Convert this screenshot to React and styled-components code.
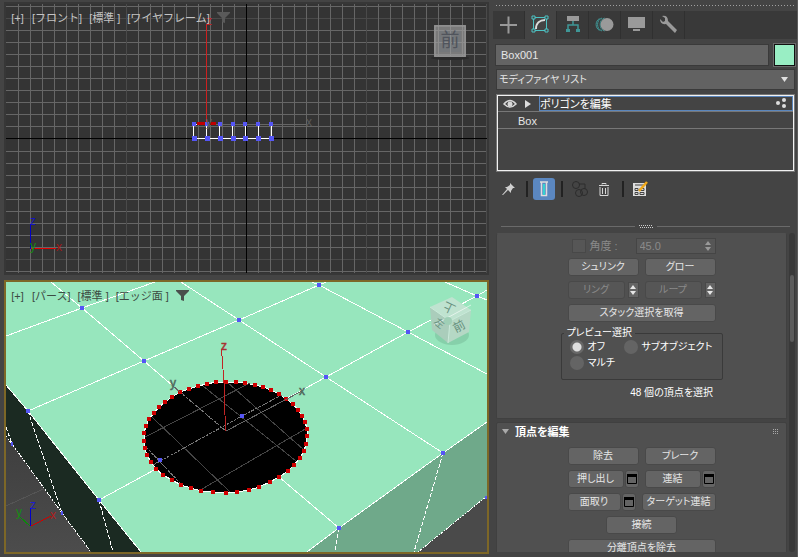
import { useState } from "react"
import styled, { createGlobalStyle } from "styled-components"

const GlobalStyle = createGlobalStyle`
* { box-sizing: border-box; }
body {
  margin: 0;
  background: #444444;
  color: #e6e6e6;
  font-family: "Liberation Sans", "Noto Sans CJK JP", sans-serif;
  font-size: 11px;
  line-height: 14px;
  font-feature-settings: "palt";
}
button, input, select {
  font: inherit;
  font-feature-settings: inherit;
  color: inherit;
  margin: 0;
}
`

const Workspace = styled.main`
  display: flex;
  gap: 4px;
  height: 100vh;
  padding-left: 4px;
  overflow: hidden;
`
const Viewports = styled.section`
  flex: 1;
  min-width: 0;
  display: grid;
  grid-template-rows: 273fr 274fr;
  gap: 5px;
  padding: 2px 0 3px;
`
const Viewport = styled.div`
  position: relative;
  min-height: 0;
  overflow: hidden;
  border: 2px solid ${p => (p.$active ? "#7d6727" : "#373737")};
  background: #343434;
`
const Scene = styled.svg`
  display: block;
  width: 100%;
  height: 100%;
  font-family: "Liberation Sans", "Noto Sans CJK JP", sans-serif;
`
const ViewLabels = styled.div`
  position: absolute;
  top: 7px;
  left: 4px;
  display: flex;
  align-items: center;
  gap: 7px;
  color: ${p => (p.$dark ? "#3c4a42" : "#c4c4c4")};
`
const ViewLabel = styled.button`
  min-width: 15px;
  padding: 0;
  border: 0;
  background: none;
  font-feature-settings: normal;
  white-space: pre;
  svg { display: block; }
`

const Panel = styled.aside`
  flex: 0 0 305px;
  display: flex;
  flex-direction: column;
  padding: 4px 2px 5px 0;
  border-right: 1px solid #5c5c5c;
`
const Grip = styled.div`
  height: 3px;
  margin: 0 0 4px 2px;
  background: radial-gradient(circle, #a0a0a0 0 1px, transparent 1px) 0 0 / 3px 3px;
`
const Tabs = styled.nav`
  display: flex;
  height: 28px;
  margin-right: -2px;
  background: #393939;
`
const Tab = styled.button`
  width: 32px;
  padding: 0;
  border: 0;
  border-right: 1px solid #303030;
  background: ${p => (p.$active ? "#444444" : "transparent")};
  display: grid;
  place-items: center;
`
const NameRow = styled.div`
  display: flex;
  gap: 5px;
  margin: 5px 0 3px 2px;
`
const NameInput = styled.input`
  flex: 1;
  min-width: 0;
  height: 22px;
  padding: 0 5px;
  border: 1px solid #3a3a3a;
  background: #646464;
`
const Swatch = styled.button`
  width: 21px;
  height: 22px;
  padding: 0;
  border: 1px solid #111;
  outline: 1px solid #6a6a6a;
  background: #99eec4;
`
const SelectWrap = styled.div`
  position: relative;
  margin-left: 3px;
  svg { position: absolute; right: 7px; top: 8px; pointer-events: none; }
`
const ModifierSelect = styled.select`
  appearance: none;
  display: block;
  width: 100%;
  height: 21px;
  padding: 0 2px;
  border: 1px solid #3a3a3a;
  border-radius: 0;
  background: #626262;
  font-size: 10px;
`
const Stack = styled.div`
  height: 78px;
  margin: 4px 0 0 3px;
  border: 2px solid #f2f2f2;
  outline: 1px solid #777;
  outline-offset: -1px;
`
const StackRow = styled.div`
  display: flex;
  align-items: center;
  gap: 6px;
  height: ${p => (p.$plain ? 17 : 16)}px;
  padding: ${p => (p.$plain ? "2px 0 0 20px" : "0 0 0 5px")};
  border-bottom: 1px solid #777;
  svg { flex: none; }
`
const StackName = styled.div`
  flex: 1;
  display: flex;
  align-items: center;
  justify-content: space-between;
  height: 15px;
  padding-right: 5px;
  border: 1px solid #5a86bd;
  color: #fff;
`
const StackTools = styled.div`
  display: flex;
  align-items: center;
  height: 22px;
  margin: 6px 0 0 4px;
`
const Tool = styled.button`
  width: ${p => p.$w || 22}px;
  height: 22px;
  padding: 0;
  border: 0;
  border-radius: 3px;
  background: ${p => (p.$active ? "#5b87c0" : "none")};
  display: grid;
  place-items: center;
`
const Divider = styled.span`
  width: 2px;
  height: 16px;
  margin: 0 ${p => p.$gap || 5}px;
  background: #222;
`
const Splitter = styled.div`
  display: flex;
  align-items: center;
  gap: 4px;
  height: 5px;
  margin: 24px 5px 4px 8px;
  &::before, &::after { content: ""; flex: 1; height: 1px; background: #6a6a6a; }
`
const Scroller = styled.div`
  flex: 1;
  min-height: 0;
  display: flex;
  gap: 2px;
  margin-left: 3px;
`
const Rollouts = styled.div`
  flex: 1;
  overflow: hidden;
`
const Track = styled.div`
  width: 6px;
  padding: 42px 1px 0;
  border-radius: 3px;
  background: #393939;
  &::before { content: ""; display: block; height: 67px; border-radius: 3px; background: #5c5c5c; }
`
const Rollout = styled.section`
  display: flex;
  flex-direction: column;
  align-items: center;
  height: ${p => (p.$first ? 186 : 150)}px;
  margin-bottom: 3px;
  padding-top: ${p => (p.$first ? 4 : 2)}px;
  border: 1px solid #404040;
  border-top-color: ${p => (p.$first ? "#505050" : "#404040")};
  border-radius: 2px;
  background: #505050;
`
const RolloutTitle = styled.h2`
  align-self: stretch;
  display: flex;
  align-items: center;
  gap: 5px;
  height: 14px;
  margin: 0 7px 8px 5px;
  font-size: 11px;
  color: #fff;
  svg:last-child { margin-left: auto; }
`
const Form = styled.div`
  width: 148px;
  display: flex;
  flex-direction: column;
  align-items: center;
  gap: 5px;
  font-size: 10px;
`
const Row = styled.div`
  width: 100%;
  display: flex;
  gap: 6px;
  height: 18px;
  flex: none;
`
const Pair = styled.div`
  display: flex;
  align-items: center;
  width: 71px;
  gap: ${p => p.$gap || 1}px;
`
const Btn = styled.button`
  flex: ${p => (p.$w ? "none" : 1)};
  width: ${p => (p.$w ? p.$w + "px" : "auto")};
  height: 18px;
  padding: 0;
  border: 1px solid #494949;
  border-radius: 3px;
  background: #646464;
  color: #e6e6e6;
  line-height: 14px;
  white-space: nowrap;
  &:disabled { background: #565656; color: #8a8a8a; }
`
const Square = styled(Btn)`
  flex: none;
  width: 14px;
  display: grid;
  place-items: center;
  svg { display: block; }
`
const Arrows = styled(Square)`
  width: 11px;
  height: 16px;
  border-radius: 0;
`
const AngleRow = styled.div`
  width: 100%;
  display: flex;
  align-items: center;
  height: 16px;
  padding-left: 4px;
  margin-bottom: -1px;
  color: #8a8a8a;
  font-size: 11px;
  label { display: flex; align-items: center; gap: 4px; flex: 1; }
`
const CheckBox = styled.input`
  appearance: none;
  width: 14px;
  height: 14px;
  border: 1px solid #484848;
  background: #565656;
`
const NumberBox = styled.div`
  display: flex;
  align-items: center;
  width: 80px;
  height: 16px;
  padding-right: 3px;
  border: 1px solid #454545;
  background: #565656;
  input { flex: 1; min-width: 0; padding: 0 3px; border: 0; background: none; }
`
const Group = styled.fieldset`
  width: 162px;
  height: 53px;
  margin: 0;
  padding: 0 0 0 8px;
  border: 1px solid #3a3a3a;
  border-radius: 2px;
  display: grid;
  grid-template-columns: 54px 1fr;
  grid-template-rows: 16px 16px;
  color: #fff;
  legend { padding: 0 3px; margin-left: -6px; height: 12px; line-height: 12px; }
  label { display: flex; align-items: center; gap: 4px; white-space: nowrap; }
`
const Radio = styled.input`
  appearance: none;
  flex: none;
  width: 14px;
  height: 14px;
  border-radius: 50%;
  background: #646464;
  &:checked { background: radial-gradient(circle, #dedede 0 4px, #686868 5px); }
`
const Status = styled.p`
  align-self: flex-end;
  margin: 6px 73px 0 0;
  font-size: 10px;
  color: #fff;
`

const Funnel = ({ fill }) => (
  <svg width="13" height="12"><path d="M0 0h13v1L8 6v5L5 10V6L0 1z" fill={fill} /></svg>
)
const UpDown = ({ fill = "#e6e6e6" }) => (
  <svg width="7" height="10"><path d="M0 4h6L3 0zM0 6h6L3 10z" fill={fill} /></svg>
)
const WindowIcon = () => (
  <svg width="10" height="10"><path d="M0.5 0.5h9v9h-9z" fill="none" stroke="#000" /><path d="M0 0h10v3H0z" /></svg>
)

// dim lines run through 126, 366 and 486, every tenth grid step
const columns = Array.from({ length: 40 }, (_, i) => 18 + i * 12)
const rows = [6, 18, 30, 42, 54, 66, 78, 90, 102, 114, 126, 151, 163, 175, 187, 199, 211, 223, 235, 247, 259, 271]
const boxX = [194, 207, 220, 233, 245, 258, 271]

const Dot = ({ x, y, color = "#5555f5", size = 4 }) => (
  <rect x={x - 2} y={y - 2} width={size} height={size} fill={color} />
)

const FrontScene = () => (
  <Scene viewBox="6 4 481 269" preserveAspectRatio="xMidYMid slice" shapeRendering="crispEdges">
    {rows.map(y => <rect key={y} x="6" y={y} width="481" height="1" fill={y === 18 || y === 259 ? "#4a4a4a" : "#666"} />)}
    {columns.map(x => <rect key={x} x={x} y="4" width="1" height="269" fill={x % 120 === 6 ? "#4a4a4a" : "#666"} />)}
    <path d="M6 138.5H487M246.5 4V273" stroke="#000" />
    <path d="M193.5 124.5H206M193.5 138.5H271M193.5 124V138M206.5 124V138M219.5 124V138M232.5 124V138M245.5 124V138M258.5 124V138M271.5 124V138" stroke="#fff" fill="none" />
    <path d="M206 124.5H307" stroke="#666" />
    <path d="M197 123.5H206M210 123.5H216" stroke="#c00000" strokeWidth="3" />
    {boxX.map(x => <g key={x}><Dot x={x} y={124} /><Dot x={x} y={138} size={5} /></g>)}
    <path d="M206.5 24V122" stroke="#cc2020" />
    <g fontSize="12">
      <text x="206" y="25" fill="#b82222">z</text>
      <text x="206" y="126" fill="#5c5c5c">y</text>
      <text x="306" y="126" fill="#5c5c5c">x</text>
      <path d="M30.5 224V249" stroke="#0000c8" />
      <path d="M31 248.5H56" stroke="#e00000" />
      <text x="30" y="225" fill="#1414c0">z</text>
      <text x="30" y="250" fill="#168a16">y</text>
      <text x="56" y="251" fill="#a01818">x</text>
    </g>
    <g shapeRendering="auto">
      <ellipse cx="450" cy="58" rx="19" ry="2" fill="#2a2a2a" />
      <rect x="434" y="25" width="32" height="32" fill="#858585" />
      <rect x="435" y="26" width="30" height="30" fill="#7a7a7a" stroke="#9a9a9a" />
      <rect x="439" y="30" width="22" height="22" fill="#70747a" opacity="0.6" />
      <path d="M438.5 26V56M450.5 26V56M462.5 26V56M435 30.5H465M435 42.5H465M435 54.5H465" stroke="#999" opacity="0.6" />
      <text x="450" y="47" fontSize="19" textAnchor="middle" fill="#50545c">前</text>
    </g>
  </Scene>
)

const hole = [
  [149, 419], [146, 426], [144, 433], [144, 441], [145, 448], [147, 455], [151, 462], [156, 469],
  [163, 475], [172, 480], [181, 485], [191, 488], [201, 491], [213, 492], [226, 493], [237, 492],
  [249, 490], [259, 487], [270, 482], [279, 477], [288, 471], [294, 465], [300, 458], [304, 451],
  [306, 444], [307, 436], [307, 429], [305, 422], [302, 416], [298, 410], [293, 404], [286, 399],
  [279, 394], [271, 390], [263, 387], [255, 385], [245, 383], [236, 382], [226, 382], [216, 382],
  [207, 384], [198, 386], [189, 389], [180, 392], [172, 397], [165, 402], [159, 407], [154, 413],
]
const vertices = [
  [82, 308], [239, 320], [144, 361], [28, 411], [319, 285], [326, 377], [408, 332],
  [477, 296], [99, 500], [443, 453], [339, 528], [242, 416], [160, 460],
]

const PerspectiveScene = () => (
  <Scene viewBox="6 282 481 270" preserveAspectRatio="xMidYMid slice" shapeRendering="crispEdges">
    <defs>
      <linearGradient id="ground" x1="0" y1="0" x2="0" y2="1">
        <stop offset="0.5" stopColor="#3c3c3c" />
        <stop offset="1" stopColor="#4c4c4c" />
      </linearGradient>
    </defs>
    <rect x="6" y="282" width="481" height="270" fill="url(#ground)" />
    <path d="M6 506L50 486" stroke="#555" />
    <path d="M6 282H487V422L443 453L339 528L307 552H141L99 500L28 411L6 385z" fill="#97e6bd" />
    <path d="M6 385L28 411L99 500L141 552H91L62 513L12 444L6 436z" fill="#1b2a22" />
    <path d="M487 422L443 453L339 528L307 552H418L487 496z" fill="#6fa98a" />
    <path d="M487 496L418 552H487z" fill="#4a4a4a" />
    <g fill="none" stroke="#fff">
      <path d="M6 336L82 308L155 282M51 282L82 308L144 361L180 392M181 282L239 320L326 377L443 453" />
      <path d="M28 411L144 361L239 320L319 285L326 282M312 282L319 285L408 332L487 374" />
      <path d="M6 385L28 411L99 500L141 552M99 500L156 469M286 399L326 377L408 332L477 296L487 290" />
      <path d="M445 282L477 296L487 300M307 552L339 528L443 453L487 422M279 477L339 528" />
      <path d="M6 436L12 444L62 513L91 552M487 496L418 552" strokeDasharray="2 1" />
      <path d="M6 427L12 444M28 411L62 513M99 500L113 552M443 453L414 552M339 528L335 552" strokeDasharray="4 2" />
    </g>
    <polygon points={hole.map(p => p.join(",")).join(" ")} fill="#000" stroke="#fff" />
    <g fill="none" stroke="#454545">
      <path d="M203 386L296 461M227 382L304 450M152 417L230 492M145 437L250 383M202 489L307 428" />
      <path d="M153 465L242 416L282 395M146 447L181 484M180 392L226 431" stroke="#777" strokeDasharray="3 1" />
    </g>
    {hole.map(([x, y]) => <Dot key={x + "-" + y} x={x} y={y} color="#d00000" />)}
    {vertices.map(([x, y]) => <Dot key={x + "-" + y} x={x} y={y} />)}
    <path d="M11 442h2v4h-2zM61 511h2v4h-2zM485 496h2v3h-2z" fill="#5555f5" />
    <path d="M226 431L302 391M173 386L180 392" stroke="#666" />
    <path d="M225.5 431L224 383L221.5 349" stroke="#c02424" fill="none" />
    <g fontSize="12">
      <text x="221" y="350" fill="#a83232" stroke="#a83232" strokeWidth="0.5">z</text>
      <text x="170" y="387" fill="#4f6a5c" stroke="#4f6a5c" strokeWidth="0.5">y</text>
      <text x="299" y="395" fill="#4f6a5c" stroke="#4f6a5c" strokeWidth="0.5">x</text>
      <path d="M30.5 508V526" stroke="#0000c8" />
      <path d="M30 526L19 516" stroke="#0a8a0a" />
      <path d="M31 526L51 516" stroke="#d00000" />
      <text x="30" y="509" fill="#1c1cd0">z</text>
      <text x="16" y="516" fill="#168a16">y</text>
      <text x="50" y="519" fill="#b02020">x</text>
    </g>
    <g shapeRendering="auto">
      <ellipse cx="452" cy="335" rx="17" ry="10" fill="#6db08e" opacity="0.4" />
      <path d="M452 297L471 310L450 321L430 307z" fill="#bfe3d0" />
      <path d="M430 307L450 321L448 343L432 330z" fill="#aacdbb" />
      <path d="M450 321L471 310L469 332L448 343z" fill="#b5d8c5" />
      <path d="M430 307L450 321L471 310M450 321L448 343" fill="none" stroke="#cbe9da" />
      <path d="M434 325L471 305" stroke="#fff" opacity="0.6" />
      <circle cx="448" cy="321" r="4" fill="#9fcfb6" />
      <g fill="#67907e" textAnchor="middle">
        <text fontSize="12" transform="translate(451 304) rotate(205)">上</text>
        <text fontSize="10" transform="translate(437 326) rotate(40)">左</text>
        <text fontSize="12" transform="translate(461 330) rotate(-28)">前</text>
      </g>
    </g>
  </Scene>
)

const tabs = [
  ["作成", <path key="c" d="M9.5 1.5v17M1 10h17" fill="none" stroke="#999" strokeWidth="2" />],
  ["修正", <g key="m" fill="none" stroke="#4cc3c4"><path d="M4 2.5H14M4 15.5H14M2.5 4V14M15.5 4V14" /><path d="M1 1h3v3H1zM14 1h3v3h-3zM1 14h3v3H1zM14 14h3v3h-3z" /><path d="M5 14C5 8 9 5 14 5" stroke="#ddd" strokeWidth="2" /></g>],
  ["階層", <g key="h"><path d="M4 1h12v5H4z" fill="#9a9a9a" /><path d="M10 6v4M5 14v-4h10v4" fill="none" stroke="#3f9696" strokeWidth="1.5" /><path d="M3 14h4v3H3zM13 14h4v3h-4z" fill="#3f9696" /></g>],
  ["モーション", <g key="o"><path d="M7 3a7 7 0 0 0 0 13M4.5 3.5a7 7 0 0 0 0 12M9.500 3a7 7 0 0 0 0 13" fill="none" stroke="#3f9696" /><circle cx="12" cy="9.5" r="6.5" fill="#9a9a9a" /></g>],
  ["表示", <path key="d" d="M1 2h17v11H1zM6 14h7v2H6z" fill="#9a9a9a" />],
  ["ユーティリティ", <path key="u" d="M1 4L4 7L6 6L6 3L3 1Q9 0 9 6L18 15L16 18L7 9Q1 10 1 4z" fill="#9a9a9a" />],
]

const ButtonPair = ({ label }) => (
  <Pair>
    <Btn>{label}</Btn>
    <Square aria-label={label + "の設定"}><WindowIcon /></Square>
  </Pair>
)

const App = () => {
  const [preview, setPreview] = useState("オフ")
  const [name, setName] = useState("Box001")
  const radio = value => (
    <label>
      <Radio type="radio" name="preview" checked={preview === value} onChange={() => setPreview(value)} />
      {value}
    </label>
  )

  return (
    <Workspace>
      <GlobalStyle />
      <Viewports>
        <Viewport>
          <FrontScene />
          <ViewLabels>
            <ViewLabel>[+]</ViewLabel>
            <ViewLabel>[フロント]</ViewLabel>
            <ViewLabel>[標準 ]</ViewLabel>
            <ViewLabel>[ワイヤフレーム]</ViewLabel>
            <ViewLabel aria-label="フィルタ"><Funnel fill="#5a5a5a" /></ViewLabel>
          </ViewLabels>
        </Viewport>
        <Viewport $active>
          <PerspectiveScene />
          <ViewLabels $dark>
            <ViewLabel>[+]</ViewLabel>
            <ViewLabel>[パース]</ViewLabel>
            <ViewLabel>[標準 ]</ViewLabel>
            <ViewLabel>[エッジ面 ]</ViewLabel>
            <ViewLabel aria-label="フィルタ"><Funnel fill="#4a4f4c" /></ViewLabel>
          </ViewLabels>
        </Viewport>
      </Viewports>

      <Panel>
        <Grip />
        <Tabs>
          {tabs.map(([title, icon], i) => (
            <Tab key={title} aria-label={title} $active={i === 1}>
              <svg width="19" height="20">{icon}</svg>
            </Tab>
          ))}
        </Tabs>
        <NameRow>
          <NameInput aria-label="名前" value={name} onChange={e => setName(e.target.value)} />
          <Swatch aria-label="カラー" />
        </NameRow>
        <SelectWrap>
          <ModifierSelect aria-label="モディファイヤ リスト">
            <option>モディファイヤ リスト</option>
          </ModifierSelect>
          <svg width="7" height="5"><path d="M0 0h7L3.5 5z" fill="#e0e0e0" /></svg>
        </SelectWrap>
        <Stack>
          <StackRow>
            <svg width="14" height="10"><path d="M1 5Q7 -2 13 5Q7 11 1 5z" fill="none" stroke="#d8d8d8" strokeWidth="1.5" /><circle cx="7" cy="5" r="2.5" fill="#d8d8d8" /></svg>
            <svg width="10" height="8"><path d="M2 0L8 4L2 8z" fill="#ddd" /></svg>
            <StackName>
              ポリゴンを編集
              <svg width="11" height="11"><circle cx="2" cy="5" r="2" fill="#ddd" /><circle cx="8" cy="2" r="2" fill="#ddd" /><circle cx="8" cy="8" r="2" fill="#ddd" /></svg>
            </StackName>
          </StackRow>
          <StackRow $plain>Box</StackRow>
        </Stack>
        <StackTools>
          <Tool $w={24} aria-label="スタックを固定">
            <svg width="14" height="14"><path d="M8 1L13 6L11 6L9 9L9 11L6 8L1 13L0 13L5 7L3 5L5 5L8 3z" fill="#d0d0d0" /></svg>
          </Tool>
          <Divider />
          <Tool $active aria-label="最終結果を表示">
            <svg width="10" height="16"><path d="M1 1h8M2.5 1V14.5h5V1" fill="none" stroke="#ddd" strokeWidth="1.5" /><path d="M4 3h2v11H4z" fill="#36d0d0" /></svg>
          </Tool>
          <Divider $gap={6} />
          <Tool aria-label="固有にする">
            <svg width="18" height="17"><g fill="none" stroke="#2c2c2c"><circle cx="5" cy="4" r="3.5" /><circle cx="8" cy="12" r="3.5" /><circle cx="13" cy="11" r="3.5" /><path d="M8 3h6v5" /></g></svg>
          </Tool>
          <Tool $w={26} aria-label="モディファイヤを除去">
            <svg width="12" height="15"><path d="M1 3.5h10M4 2.5V1.5h4v1M2 5v8.5h8V5M4.5 6v6M7.5 6v6" fill="none" stroke="#d6d6d6" /></svg>
          </Tool>
          <Divider />
          <Tool aria-label="モディファイヤ セットを設定">
            <svg width="16" height="16"><path d="M1 2h13v13H1z" fill="#ddd" /><path d="M3 4h9M3 7.5h3v2H3zM8 7.5h4v2H8zM3 11.5h3v2H3zM8 11.5h4v2H8z" fill="none" stroke="#444" /><path d="M7 10L15 1" stroke="#f0a818" strokeWidth="2.5" /></svg>
          </Tool>
        </StackTools>
        <Splitter>
          <svg width="14" height="4"><path d="M0 0.5H14M1 2.5H14" stroke="#ccc" strokeDasharray="1 1" /></svg>
        </Splitter>
        <Scroller>
          <Rollouts>
            <Rollout $first>
              <Form>
                <AngleRow>
                  <label><CheckBox type="checkbox" disabled />角度 :</label>
                  <NumberBox>
                    <input aria-label="角度" defaultValue="45.0" disabled />
                    <UpDown fill="#999" />
                  </NumberBox>
                </AngleRow>
                <Row><Btn>シュリンク</Btn><Btn>グロー</Btn></Row>
                <Row>
                  <Pair $gap={3}><Btn disabled>リング</Btn><Arrows aria-label="リングの移動"><UpDown /></Arrows></Pair>
                  <Pair $gap={3}><Btn disabled>ループ</Btn><Arrows aria-label="ループの移動"><UpDown /></Arrows></Pair>
                </Row>
                <Row><Btn>スタック選択を取得</Btn></Row>
                <Group>
                  <legend>プレビュー選択</legend>
                  {radio("オフ")}
                  {radio("サブオブジェクト")}
                  {radio("マルチ")}
                </Group>
              </Form>
              <Status>48 個の頂点を選択</Status>
            </Rollout>
            <Rollout>
              <RolloutTitle>
                <svg width="8" height="6"><path d="M0 0h7L3.5 5z" fill="#aaa" /></svg>
                頂点を編集
                <svg width="6" height="6"><path d="M0 .5H6M0 2.5H6M0 4.5H6" stroke="#aaa" strokeDasharray="1 1" /></svg>
              </RolloutTitle>
              <Form>
                <Row><Btn>除去</Btn><Btn>ブレーク</Btn></Row>
                <Row><ButtonPair label="押し出し" /><ButtonPair label="連結" /></Row>
                <Row><ButtonPair label="面取り" /><Btn $w={74}>ターゲット連結</Btn></Row>
                <Btn $w={71}>接続</Btn>
                <Row><Btn>分離頂点を除去</Btn></Row>
              </Form>
            </Rollout>
          </Rollouts>
          <Track />
        </Scroller>
      </Panel>
    </Workspace>
  )
}

export default App
